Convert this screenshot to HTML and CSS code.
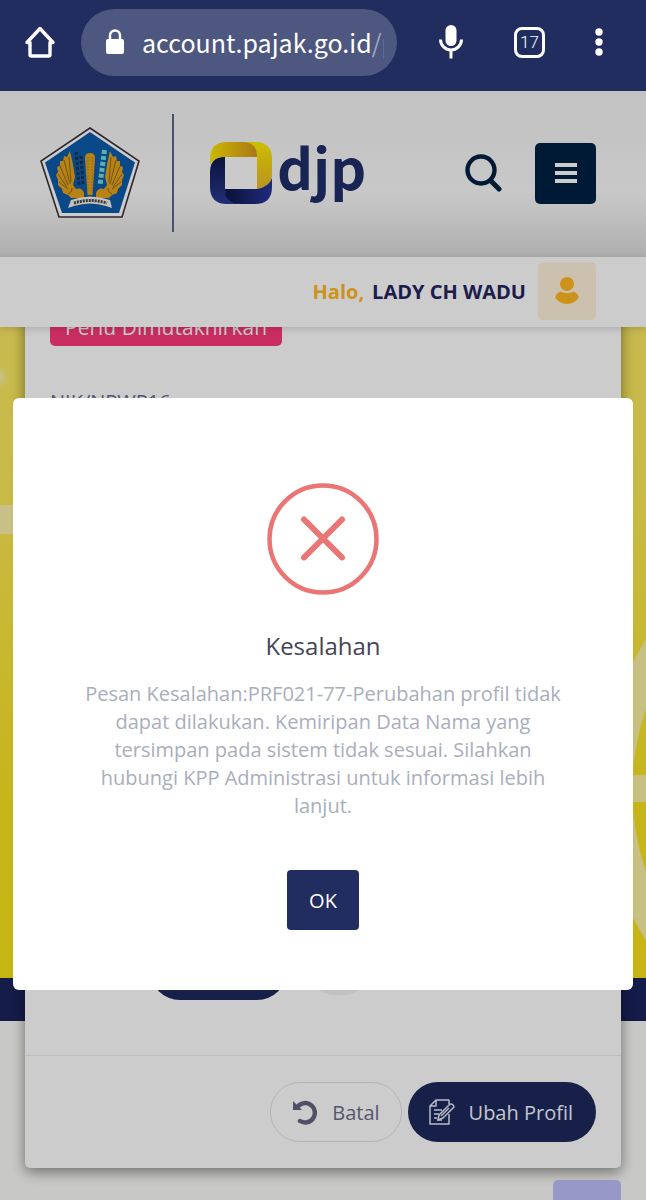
FILE: index.html
```html
<!DOCTYPE html>
<html lang="id">
<head>
  <meta charset="UTF-8">
  <meta name="viewport" content="width=device-width, initial-scale=1.0">
  <title>DJP Online - Profil</title>
  <link rel="stylesheet" href="styles.css">
</head>
<body>
  <header class="browser">
    <button class="browser-btn" aria-label="Beranda">
      <svg width="32" height="32" viewBox="0 0 32 32" fill="none" stroke="#fff" stroke-width="3.4" stroke-linejoin="round" stroke-linecap="round">
        <path d="M16 2.500L29 16.500H26V28.500Q26 30 24.500 30H7.500Q6 30 6 28.500V16.500H3Z"/>
      </svg>
    </button>
    <a class="address" href="#">
      <svg width="20" height="26" viewBox="0 0 20 26">
        <rect x="1" y="10" width="18" height="15" rx="2" fill="#fff"/>
        <path d="M5 11V6.500a5 5 0 0 1 10 0V11" fill="none" stroke="#fff" stroke-width="2.400"/>
      </svg>
      <span class="url">account.pajak.go.id<span class="path">/p</span></span>
    </a>
    <div class="browser-tools">
      <button class="browser-btn" aria-label="Suara">
        <svg width="26" height="36" viewBox="0 0 26 36">
          <rect x="7.500" y="1" width="11" height="21" rx="5.500" fill="#fff"/>
          <path d="M2.500 15.500a10.500 10.500 0 0 0 21 0M13 26v8.500" fill="none" stroke="#fff" stroke-width="3"/>
        </svg>
      </button>
      <button class="tabs" aria-label="Tab">17</button>
      <button class="browser-btn" aria-label="Menu browser">
        <svg width="8" height="28" viewBox="0 0 8 28" fill="#fff">
          <circle cx="4" cy="4" r="3.700"/><circle cx="4" cy="14" r="3.700"/><circle cx="4" cy="24" r="3.700"/>
        </svg>
      </button>
    </div>
  </header>

  <div class="page">
    <div class="topbar">
      <svg class="emblem" width="102" height="92" viewBox="0 0 102 92">
        <path d="M51 1L100 34L83 90H20L2 34Z" fill="#fff" stroke="#3d3038" stroke-width="1.600"/>
        <path d="M51 5L96 35.500L80 86H23L6 35.500Z" fill="#0c5cab"/>
        <!-- wings -->
        <g fill="#e5a31c">
          <path d="M31 24L28 30L25 29L24 34L21 34L21 39L18 40L19 45L17 48L19 53L19 58L23 62L24 66L29 68L32 71H45V66Q43 60 37 62L34 58L36 50Q34 36 31 24Z"/>
          <path d="M71 24L74 30L77 29L78 34L81 34L81 39L84 40L83 45L85 48L83 53L83 58L79 62L78 66L73 68L70 71H57V66Q59 60 65 62L68 58L66 50Q68 36 71 24Z"/>
          <path d="M46 31Q46 26 51 26T56 31L53.500 68H48.500Z"/>
        </g>
        <path d="M30 30L32 55M25 33L31 57M21 39L29 58M19 47L28 60M20 55L29 62M72 30L70 55M77 33L71 57M81 39L73 58M83 47L74 60M82 55L73 62" fill="none" stroke="#8f6b1d"/>
        <path d="M29 67Q34 65 33 61M73 67Q68 65 69 61" fill="none" stroke="#8f6b1d"/>
        <path d="M49 30v34M53 30v34" stroke="#b98620" stroke-dasharray="2 1"/>
        <path d="M37 25L40 58M42 29L44 57" stroke="#1b3450" stroke-width="3" stroke-dasharray="3 2"/>
        <path d="M65.500 23L61 58" stroke="#72ded5" stroke-width="5" stroke-dasharray="4 2"/>
        <path d="M32 73Q51 66 71 73L73 81L67 79Q51 74 35 79L29 81Z" fill="#f7f2e8"/>
        <path d="M35 76Q51 71 68 76" fill="none" stroke="#444" stroke-width="3" stroke-dasharray="2 1"/>
      </svg>
      <span class="divider"></span>
      <a class="brand" href="#">
        <svg width="64" height="64" viewBox="0 0 64 64">
          <defs>
            <linearGradient id="gold" x1="0" x2="1"><stop offset="0" stop-color="#ffe600"/><stop offset="1" stop-color="#d59620"/></linearGradient>
            <linearGradient id="goldSide" x1="0" x2="0" y1="0" y2="1"><stop offset="0" stop-color="#ffef00"/><stop offset="1" stop-color="#e8b72c"/></linearGradient>
            <linearGradient id="navy" x1="0" x2="1"><stop offset="0" stop-color="#0c1548"/><stop offset="1" stop-color="#28379b"/></linearGradient>
            <linearGradient id="navySide" x1="0" x2="0" y1="0" y2="1"><stop offset="0" stop-color="#10184c"/><stop offset="1" stop-color="#293a95"/></linearGradient>
          </defs>
          <path d="M34 1H46Q63 1 63 18V32Q63 47 48 48V16Z" fill="url(#goldSide)"/>
          <path d="M1 24V18Q1 1 18 1H34Q48 1 48 16H16Q4 16 1 24Z" fill="url(#gold)"/>
          <path d="M16 16V48Q17 60 30 63H18Q1 63 1 46V31Q1 16 16 16Z" fill="url(#navySide)"/>
          <path d="M16 48H48Q60 46 63 37V46Q63 63 46 63H32Q16 63 16 48Z" fill="url(#navy)"/>
          <path d="M16 16H48V48H16Z" fill="#fdfdfd"/>
        </svg>
        <span class="brand-name">djp</span>
      </a>
      <button class="search" aria-label="Cari">
        <svg width="38" height="40" viewBox="0 0 38 40" fill="none" stroke="#002143" stroke-linecap="round">
          <circle cx="17" cy="17" r="13.500" stroke-width="4.400"/>
          <path d="M27 28L35 36" stroke-width="5"/>
        </svg>
      </button>
      <button class="menu" aria-label="Menu">
        <span class="line"></span><span class="line"></span><span class="line"></span>
      </button>
    </div>

    <div class="userbar">
      <span class="hello">Halo,</span>
      <span class="username">LADY CH WADU</span>
      <a class="avatar" href="#" aria-label="Profil">
        <svg width="24" height="28" viewBox="0 0 24 28" fill="#ffb822">
          <circle cx="12" cy="7" r="7"/>
          <path d="M0 20Q2 16 5 14.500Q12 18 19 14.500Q22 16 24 20Q20 27 12 27T0 20Z"/>
        </svg>
      </a>
    </div>

    <main class="content">
      <section class="card">
        <div class="card-body">
          <span class="badge">Perlu Dimutakhirkan</span>
          <span class="label">NIK/NPWP16</span>
          <div class="pills">
            <span class="pill pill-dark"></span>
            <span class="pill pill-light"></span>
          </div>
        </div>
        <div class="card-footer">
          <button class="btn btn-cancel">
            <svg width="26" height="26" viewBox="0 0 26 26">
              <path d="M5 8.500A9.700 9.700 0 1 1 8 22" fill="none" stroke="#646580" stroke-width="4.400" stroke-linecap="round"/>
              <path d="M1 2L10 11H1Z" fill="#646580"/>
            </svg>
            Batal
          </button>
          <button class="btn btn-edit">
            <svg width="26" height="26" viewBox="0 0 26 26" fill="none" stroke="#e6e9f8" stroke-width="1.500" stroke-linejoin="round">
              <path d="M20 5V1H7L1 7V25H20V15M7 1V7H1"/>
              <path d="M5 11H13M5 15H10M5 19H8"/>
              <path d="M10 16L20 6Q22 4 24 6T24 9L14 19L9 21Z"/>
              <path d="M12 17L20 9M8 21h5"/>
            </svg>
            Ubah Profil
          </button>
        </div>
      </section>
    </main>

    <a class="scroll-top" href="#" aria-label="Ke atas"></a>

    <div class="overlay">
      <div class="modal" role="dialog" aria-labelledby="modal-title">
        <svg width="112" height="112" viewBox="0 0 112 112" fill="none" stroke="#eb7475">
          <circle cx="56" cy="56" r="53.500" stroke-width="4.500"/>
          <path d="M37 36.500L75 74.500M75 36.500L37 74.500" stroke-width="6" stroke-linecap="round"/>
        </svg>
        <h2 class="modal-title" id="modal-title">Kesalahan</h2>
        <p class="modal-text">Pesan Kesalahan:PRF021-77-Perubahan profil tidak dapat dilakukan. Kemiripan Data Nama yang tersimpan pada sistem tidak sesuai. Silahkan hubungi KPP Administrasi untuk informasi lebih lanjut.</p>
        <button class="modal-ok">OK</button>
      </div>
    </div>
  </div>
</body>
</html>
```

FILE: styles.css
```css
* {
  margin: 0;
  padding: 0;
  box-sizing: border-box;
}

body {
  display: flex;
  flex-direction: column;
  min-height: 100vh;
  font-family: "Open Sans", "Noto Sans", sans-serif;
  font-size: 20px;
  color: #646c9a;
}

button {
  border: none;
  background: none;
  font: inherit;
  cursor: pointer;
}

a {
  text-decoration: none;
}

svg {
  display: block;
  flex-shrink: 0;
}

/* Browser bar */
.browser {
  display: flex;
  align-items: center;
  gap: 25px;
  padding: 0 43px 7px 24px;
  height: 91px;
  background: #212c5f;
}

.address {
  flex: 1;
  display: flex;
  align-items: center;
  gap: 17px;
  min-width: 0;
  height: 67px;
  padding: 0 13px 0 24px;
  border-radius: 34px;
  background: #4e5780;
}

.url {
  overflow: hidden;
  font-family: "Noto Sans CJK SC", sans-serif;
  font-size: 25px;
  color: #fff;
  white-space: nowrap;
}

.path {
  color: #9da5c2;
}

.browser-tools {
  display: flex;
  align-items: center;
  gap: 50px;
  margin-left: 16px;
}

.tabs {
  width: 31px;
  height: 31px;
  border: 3px solid #fff;
  border-radius: 8px;
  font-family: Roboto, sans-serif;
  font-size: 17px;
  font-weight: 300;
  line-height: 24px;
  color: #fff;
}

/* Site header */
.page {
  position: relative;
  flex: 1;
  display: flex;
  flex-direction: column;
  overflow: hidden;
}

.topbar {
  z-index: 1;
  display: flex;
  align-items: center;
  height: 166px;
  padding: 0 50px 2px 39px;
  background: linear-gradient(#f4f3f4, #fafafa 60%, #f4f4f4 70%, #dadada);
}

.divider {
  width: 2px;
  height: 118px;
  margin: 0 35px 0 31px;
  background: #5c6787;
}

.brand {
  display: flex;
  align-items: center;
  gap: 4px;
}

.brand-name {
  padding-bottom: 14px;
  font-family: "Noto Sans CJK SC", sans-serif;
  font-size: 56px;
  font-weight: 700;
  line-height: 80px;
  color: #1f2d68;
}

.search {
  margin: 0 33px 0 auto;
}

.menu {
  display: flex;
  flex-direction: column;
  align-items: center;
  justify-content: center;
  gap: 4px;
  width: 61px;
  height: 61px;
  border-radius: 5px;
  background: #002143;
}

.line {
  width: 22px;
  height: 4px;
  background: #fff;
}

.userbar {
  z-index: 1;
  display: flex;
  align-items: center;
  justify-content: flex-end;
  gap: 8px;
  height: 70px;
  padding: 0 50px 2px;
  background: #fff;
  box-shadow: 0 2px 8px rgba(0, 0, 0, 0.15);
  font-weight: 700;
}

.hello {
  color: #ffb822;
}

.username {
  color: #242560;
}

.avatar {
  display: flex;
  align-items: center;
  justify-content: center;
  width: 58px;
  height: 58px;
  margin-left: 4px;
  border-radius: 5px;
  background: #fff0da;
}

/* Content, slides under the user bar */
.content {
  flex: 1;
  display: flex;
  margin-top: -70px;
  padding: 0 25px 32px;
  background:
    radial-gradient(circle at calc(100% + 239px) 533px, transparent 252px, #faf0a0 253px, #faf0a0 282px, transparent 283px) right top / 13px 721px no-repeat,
    linear-gradient(#faf0a0, #faf0a0) right 518px / 13px 27px no-repeat,
    radial-gradient(ellipse at 0 120px, #faf3b0, transparent 9px),
    linear-gradient(#faf0a8, #faf0a8) left 248px / 13px 29px no-repeat,
    linear-gradient(#fbe968 0, #fbe958 236px, #f8e320 550px, #f8e318 721px, #1a235c 721px, #1a235c 764px, #fbfbf9 764px);
}

.card {
  flex: 1;
  display: flex;
  flex-direction: column;
  border-radius: 5px;
  background: #fff;
  box-shadow: 0 4px 14px rgba(0, 0, 0, 0.45);
}

.card-body {
  flex: 1;
  display: flex;
  flex-direction: column;
  align-items: flex-start;
  padding: 51px 25px 55px;
}

.badge {
  padding: 0 15px;
  border-radius: 5px;
  background: #fd397a;
  font-size: 21px;
  line-height: 38px;
  color: #fff;
}

.label {
  margin-top: 42px;
}

.pills {
  display: flex;
  align-items: flex-start;
  gap: 20px;
  margin: auto 0 0 100px;
}

.pill {
  border-radius: 30px;
}

.pill-dark {
  width: 137px;
  height: 60px;
  background: #1d285c;
}

.pill-light {
  width: 64px;
  height: 55px;
  background: #f2f2f4;
}

.card-footer {
  display: flex;
  justify-content: flex-end;
  gap: 6px;
  padding: 26px 25px;
  border-top: 1px solid #ebebee;
}

.btn {
  display: flex;
  align-items: center;
  gap: 14px;
  height: 60px;
  padding: 0 21px;
  border-radius: 30px;
}

.btn-cancel {
  border: 1px solid #e2e2e6;
  color: #6c6d88;
}

.btn-edit {
  padding-right: 23px;
  background: #1d285c;
  color: #f4f5ff;
}

.scroll-top {
  position: absolute;
  right: 25px;
  bottom: -40px;
  width: 68px;
  height: 60px;
  border-radius: 5px;
  background: #bdbffa;
}

/* Error dialog */
.overlay {
  position: absolute;
  inset: 0;
  z-index: 2;
  padding: 307px 13px 0;
  background: rgba(0, 0, 0, 0.2);
}

.modal {
  display: flex;
  flex-direction: column;
  align-items: center;
  padding: 85px 64px 60px;
  border-radius: 6px;
  background: #fff;
}

.modal-title {
  margin-top: 33px;
  font-size: 24px;
  font-weight: 400;
  line-height: 36px;
  color: #464457;
}

.modal-text {
  margin-top: 16px;
  line-height: 28px;
  text-align: center;
  color: #aaaebc;
}

.modal-ok {
  width: 72px;
  height: 60px;
  margin-top: 50px;
  border-radius: 4px;
  background: #212c5f;
  color: #fff;
}
```
